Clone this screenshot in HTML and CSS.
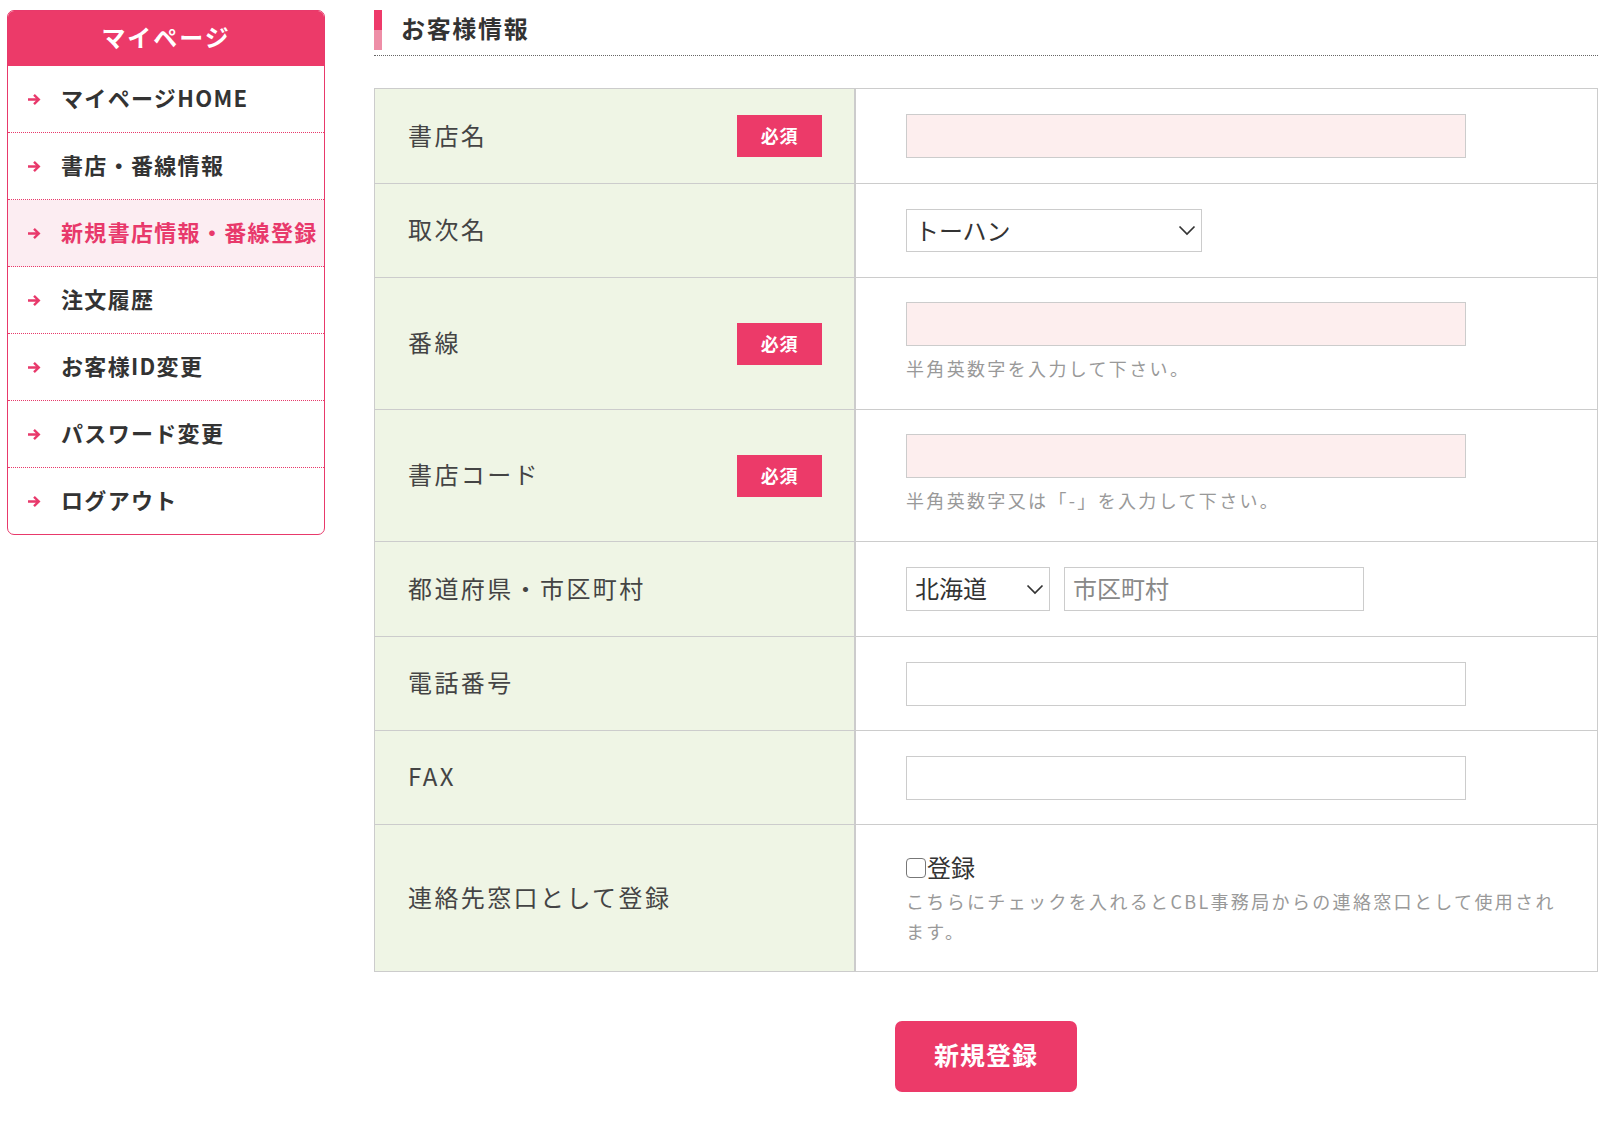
FILE: index.html
```html
<!DOCTYPE html>
<html lang="ja">
<head>
<meta charset="utf-8">
<title>お客様情報</title>
<link rel="stylesheet" href="styles.css">
</head>
<body>
<div class="page">
  <aside class="side">
    <div class="side-head">マイページ</div>
    <ul class="side-menu">
      <li class="side-item"><svg class="arw" width="14" height="13" viewBox="0 0 14 13"><path d="M1 6.5H12M7 1.8L11.8 6.5L7 11.2" fill="none" stroke="#e8396b" stroke-width="2.4"/></svg><span>マイページHOME</span></li>
      <li class="side-item"><svg class="arw" width="14" height="13" viewBox="0 0 14 13"><path d="M1 6.5H12M7 1.8L11.8 6.5L7 11.2" fill="none" stroke="#e8396b" stroke-width="2.4"/></svg><span>書店・番線情報</span></li>
      <li class="side-item active"><svg class="arw" width="14" height="13" viewBox="0 0 14 13"><path d="M1 6.5H12M7 1.8L11.8 6.5L7 11.2" fill="none" stroke="#e8396b" stroke-width="2.4"/></svg><span>新規書店情報・番線登録</span></li>
      <li class="side-item"><svg class="arw" width="14" height="13" viewBox="0 0 14 13"><path d="M1 6.5H12M7 1.8L11.8 6.5L7 11.2" fill="none" stroke="#e8396b" stroke-width="2.4"/></svg><span>注文履歴</span></li>
      <li class="side-item"><svg class="arw" width="14" height="13" viewBox="0 0 14 13"><path d="M1 6.5H12M7 1.8L11.8 6.5L7 11.2" fill="none" stroke="#e8396b" stroke-width="2.4"/></svg><span>お客様ID変更</span></li>
      <li class="side-item"><svg class="arw" width="14" height="13" viewBox="0 0 14 13"><path d="M1 6.5H12M7 1.8L11.8 6.5L7 11.2" fill="none" stroke="#e8396b" stroke-width="2.4"/></svg><span>パスワード変更</span></li>
      <li class="side-item last"><svg class="arw" width="14" height="13" viewBox="0 0 14 13"><path d="M1 6.5H12M7 1.8L11.8 6.5L7 11.2" fill="none" stroke="#e8396b" stroke-width="2.4"/></svg><span>ログアウト</span></li>
    </ul>
  </aside>

  <main class="main">
    <h2 class="title"><span class="title-bar"></span><span class="title-text">お客様情報</span></h2>

    <div class="form">
      <div class="row">
        <div class="label"><span class="ltext">書店名</span><span class="req">必須</span></div>
        <div class="value"><input class="field pink" type="text"></div>
      </div>
      <div class="row">
        <div class="label"><span class="ltext">取次名</span></div>
        <div class="value">
          <div class="sel sel-wide">
            <select><option>トーハン</option></select>
            <svg class="chev" width="18" height="11" viewBox="0 0 18 11"><path d="M1.5 1.5L9 9L16.5 1.5" fill="none" stroke="#333" stroke-width="1.7"/></svg>
          </div>
        </div>
      </div>
      <div class="row">
        <div class="label"><span class="ltext">番線</span><span class="req">必須</span></div>
        <div class="value with-hint"><input class="field pink" type="text"><p class="hint">半角英数字を入力して下さい。</p></div>
      </div>
      <div class="row">
        <div class="label"><span class="ltext">書店コード</span><span class="req">必須</span></div>
        <div class="value with-hint"><input class="field pink" type="text"><p class="hint">半角英数字又は「-」を入力して下さい。</p></div>
      </div>
      <div class="row">
        <div class="label"><span class="ltext">都道府県・市区町村</span></div>
        <div class="value pref">
          <div class="sel sel-pref">
            <select><option>北海道</option></select>
            <svg class="chev" width="18" height="11" viewBox="0 0 18 11"><path d="M1.5 1.5L9 9L16.5 1.5" fill="none" stroke="#333" stroke-width="1.7"/></svg>
          </div>
          <input class="field city" type="text" placeholder="市区町村">
        </div>
      </div>
      <div class="row">
        <div class="label"><span class="ltext">電話番号</span></div>
        <div class="value tight"><input class="field" type="text"></div>
      </div>
      <div class="row">
        <div class="label"><span class="ltext">FAX</span></div>
        <div class="value tight"><input class="field" type="text"></div>
      </div>
      <div class="row last">
        <div class="label"><span class="ltext">連絡先窓口として登録</span></div>
        <div class="value contact">
          <label class="check"><input type="checkbox"><span>登録</span></label>
          <p class="hint hint-long">こちらにチェックを入れるとCBL事務局からの連絡窓口として使用されます。</p>
        </div>
      </div>
    </div>

    <div class="actions"><button class="submit" type="button">新規登録</button></div>
  </main>
</div>
</body>
</html>
```

FILE: styles.css
```css
* { box-sizing: border-box; }

body {
  margin: 0;
  font-family: "Noto Sans CJK JP", "Noto Sans", sans-serif;
  color: #333;
  background: #fff;
}

.page {
  display: flex;
  align-items: flex-start;
  gap: 49px;
  padding: 10px 10px 40px 7px;
}

/* sidebar */
.side {
  width: 318px;
  flex: none;
  border: 1px solid #e8396b;
  border-radius: 7px;
  overflow: hidden;
}

.side-head {
  height: 55px;
  padding-bottom: 4px;
  background: #ec3a69;
  color: #fff;
  font-size: 24px;
  font-weight: 700;
  letter-spacing: 0.08em;
  display: flex;
  align-items: center;
  justify-content: center;
}

.side-menu {
  list-style: none;
  margin: 0;
  padding: 0;
}

.side-item {
  height: 67px;
  display: flex;
  align-items: center;
  padding-left: 19px;
  border-bottom: 1px dotted #e8396b;
  font-size: 22px;
  font-weight: 700;
  letter-spacing: 0.06em;
  color: #333;
}

.side-item span { padding-bottom: 4px; }

.side-item.last {
  height: 66px;
  border-bottom: none;
}

.side-item.active {
  background: #fcedf2;
  color: #e8396b;
}

.arw {
  flex: none;
  margin-right: 20px;
}

/* main */
.main {
  flex: 1;
  min-width: 0;
}

.title {
  margin: 0;
  display: flex;
  align-items: center;
  height: 46px;
  padding-bottom: 6px;
  border-bottom: 1px dotted #666;
}

.title-bar {
  width: 8px;
  height: 40px;
  background: linear-gradient(#ee3a6a 0 50%, #ee8ea7 50% 100%);
  margin-right: 19px;
}

.title-text {
  font-size: 24px;
  font-weight: 700;
  letter-spacing: 0.07em;
  color: #333;
  padding-bottom: 4px;
}

.form {
  margin-top: 32px;
  border: 1px solid #ccc;
}

.row {
  display: grid;
  grid-template-columns: 480px 1fr;
  border-bottom: 1px solid #ccc;
}

.row.last { border-bottom: none; }

.label {
  background: #eff5e5;
  border-right: 1px solid #ccc;
  display: flex;
  align-items: center;
  justify-content: space-between;
  padding: 0 32px 0 33px;
  font-size: 24px;
  letter-spacing: 0.1em;
  color: #444;
}

.ltext { padding-bottom: 4px; }

.req {
  width: 85px;
  height: 42px;
  padding-bottom: 2px;
  background: #ec3a69;
  color: #fff;
  font-size: 18px;
  font-weight: 700;
  letter-spacing: 0.04em;
  display: flex;
  align-items: center;
  justify-content: center;
}

.value {
  border-left: 1px solid #ccc;
  padding: 25px 28px 25px 50px;
}

.value.with-hint { padding-top: 24px; padding-bottom: 26px; }

.value.tight { padding-bottom: 24px; }

.field {
  display: block;
  width: 560px;
  height: 44px;
  border: 1px solid #ccc;
  border-radius: 0;
  background: #fff;
  padding: 0 8px 3px;
  font-family: inherit;
  font-size: 24px;
  color: #333;
  outline: none;
}

.field.pink { background: #fdeeee; }

.field::placeholder { color: #888; }

.hint {
  margin: 7px 0 0;
  font-size: 18px;
  line-height: 30px;
  letter-spacing: 0.13em;
  color: #999;
}

.sel {
  display: grid;
  align-items: center;
  height: 43px;
}

.sel select,
.sel .chev {
  grid-area: 1 / 1;
}

.sel select {
  appearance: none;
  -webkit-appearance: none;
  height: 100%;
  width: 100%;
  border: 1px solid #ccc;
  border-radius: 0;
  background: #fff;
  padding: 0 8px 3px;
  font-family: inherit;
  font-size: 24px;
  color: #333;
  outline: none;
}

.sel .chev {
  justify-self: end;
  margin-right: 6px;
  pointer-events: none;
}

.sel-wide { width: 296px; }

.pref {
  display: flex;
  gap: 14px;
}

.sel-pref { width: 144px; height: 44px; }

.field.city { width: 300px; }

.check {
  display: flex;
  align-items: center;
  height: 36px;
  font-size: 24px;
  color: #333;
}

.check span { padding-bottom: 3px; }

.check input {
  appearance: none;
  -webkit-appearance: none;
  width: 20px;
  height: 20px;
  margin: 0 1px 0 0;
  border: 1.5px solid #777;
  border-radius: 4px;
  background: #fff;
}

.hint-long { margin-top: 0; }

.actions {
  display: flex;
  justify-content: center;
  margin-top: 49px;
}

.submit {
  width: 182px;
  height: 71px;
  padding-bottom: 6px;
  border: none;
  border-radius: 7px;
  background: #ec3a69;
  color: #fff;
  font-family: inherit;
  font-size: 25px;
  font-weight: 700;
  letter-spacing: 0.04em;
}
```
